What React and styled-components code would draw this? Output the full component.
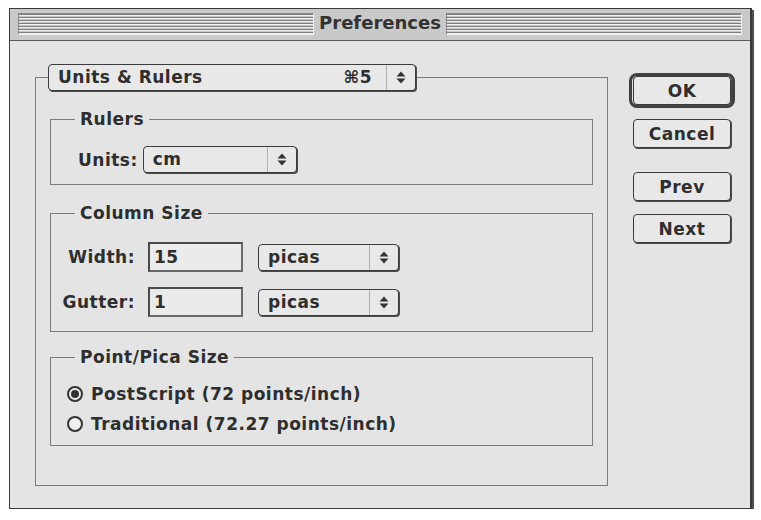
import React from 'react'
import styled, { createGlobalStyle } from 'styled-components'

const GlobalStyle = createGlobalStyle`
    html, body {
        margin: 0;
        padding: 0;
        background: #ffffff;
    }
    body {
        font-family: "DejaVu Sans", sans-serif;
        font-weight: bold;
        color: #2e2e2e;
        letter-spacing: 0.5px;
    }
`

const Window = styled.div`
    margin: 8px 0 0 9px;
    width: 743px;
    height: 501px;
    box-sizing: border-box;
    border: 1px solid #3a3a3a;
    border-right-width: 2px;
    box-shadow: 2px 2px 0 #505050;
    background: #e4e4e4;
    display: flex;
    flex-direction: column;
`

const TitleBar = styled.div`
    box-sizing: border-box;
    height: 32px;
    border-bottom: 1px solid #5a5a5a;
    background: #c9c9c9;
    display: flex;
    align-items: flex-start;
    padding: 4px 8px 0 8px;
`

const Stripes = styled.div`
    flex: 1;
    height: 20px;
    border-top: 1px solid #8a8a8a;
    border-left: 1px solid #8a8a8a;
    border-bottom: 1px solid #f2f2f2;
    border-right: 1px solid #f2f2f2;
    background: repeating-linear-gradient(
        to bottom,
        #7e7e7e 0 1px,
        #f0f0f0 1px 2px,
        #c6c6c6 2px 3px
    );
`

const Title = styled.div`
    padding: 0 5px;
    font-size: 18px;
    line-height: 20px;
    letter-spacing: 0;
    color: #333;
`

const Content = styled.div`
    flex: 1;
    display: flex;
    align-items: flex-start;
`

const MainGroup = styled.div`
    margin: 36px 0 0 25px;
    width: 573px;
    height: 409px;
    box-sizing: border-box;
    border: 1px solid #7c7c7c;
    display: flex;
    flex-direction: column;
    padding: 0 14px;
`

const Popup = styled.div`
    display: flex;
    align-items: stretch;
    width: ${(p) => p.w}px;
    height: 27px;
    box-sizing: border-box;
    border: 1px solid #3c3c3c;
    border-radius: 4px;
    box-shadow: 1px 1px 0 #4a4a4a;
    background: #e8e8e8;
    font-size: 17px;
`

const MenuPopup = styled(Popup)`
    margin: -14px 0 0 -2px;
`

const PopupText = styled.div`
    flex: 1;
    display: flex;
    align-items: center;
    justify-content: space-between;
    padding: 0 14px 0 9px;
    line-height: 25px;
`

const ArrowBox = styled.div`
    width: 28px;
    border-left: 1px solid #b0b0b0;
    display: flex;
    align-items: center;
    justify-content: center;
`

const Group = styled.div`
    margin-top: ${(p) => p.top}px;
    border: 1px solid #7c7c7c;
    display: flex;
    flex-direction: column;
    padding: 0 0 ${(p) => p.bottom}px 0;
`

const Legend = styled.div`
    align-self: flex-start;
    margin: -10px 0 0 24px;
    padding: 0 5px;
    height: 18px;
    line-height: 18px;
    font-size: 17px;
    background: #e4e4e4;
`

const Row = styled.div`
    display: flex;
    align-items: center;
    margin-top: ${(p) => p.top}px;
    padding-left: ${(p) => p.left || 0}px;
`

const Label = styled.div`
    font-size: 17px;
    width: ${(p) => (p.w ? p.w + 'px' : 'auto')};
    text-align: right;
    margin-right: ${(p) => p.gap}px;
`

const TextField = styled.div`
    width: 95px;
    height: 30px;
    box-sizing: border-box;
    border: 2px solid #4a4a4a;
    border-right-color: #6a6a6a;
    border-bottom-color: #6a6a6a;
    background: #ebebeb;
    font-size: 17px;
    line-height: 26px;
    padding-left: 4px;
    margin-right: 15px;
`

const RadioRow = styled.div`
    display: flex;
    align-items: center;
    height: 24px;
    margin-top: ${(p) => p.top}px;
    padding-left: 16px;
    font-size: 17px;
`

const Radio = styled.span`
    width: 16px;
    height: 16px;
    box-sizing: border-box;
    border: 2px solid #333;
    border-radius: 50%;
    background: #f0f0f0;
    margin-right: 8px;
    display: flex;
    align-items: center;
    justify-content: center;

    &::after {
        content: '';
        width: 8px;
        height: 8px;
        border-radius: 50%;
        background: ${(p) => (p.on ? '#333' : 'transparent')};
    }
`

const Buttons = styled.div`
    margin: 32px 0 0 21px;
    width: 106px;
    display: flex;
    flex-direction: column;
    align-items: center;
`

const DefaultRing = styled.div`
    width: 106px;
    height: 35px;
    box-sizing: border-box;
    border: 3px solid #404040;
    border-radius: 8px;
    display: flex;
    align-items: center;
    justify-content: center;
`

const Button = styled.div`
    width: 98px;
    height: 29px;
    box-sizing: border-box;
    margin-top: ${(p) => p.top || 0}px;
    border: 1px solid #3a3a3a;
    border-radius: 4px;
    box-shadow: 1px 1px 0 #4a4a4a;
    background: #e8e8e8;
    font-size: 17px;
    display: flex;
    align-items: center;
    justify-content: center;
`

const Arrows = () => (
    <svg width="10" height="13" viewBox="0 0 10 13">
        <path d="M5 0.5 L9.5 5.5 L0.5 5.5 Z" fill="#333" />
        <path d="M5 12.5 L9.5 7.5 L0.5 7.5 Z" fill="#333" />
    </svg>
)

function PopupMenu({ w, text, shortcut, as: Comp = Popup }) {
    return (
        <Comp w={w}>
            <PopupText>
                <span>{text}</span>
                {shortcut && <span>{shortcut}</span>}
            </PopupText>
            <ArrowBox>
                <Arrows />
            </ArrowBox>
        </Comp>
    )
}

export default function App() {
    return (
        <>
            <GlobalStyle />
            <Window>
                <TitleBar>
                    <Stripes />
                    <Title>Preferences</Title>
                    <Stripes />
                </TitleBar>
                <Content>
                    <MainGroup>
                        <PopupMenu as={MenuPopup} w={368} text="Units & Rulers" shortcut="⌘5" />

                        <Group top={28} bottom={11}>
                            <Legend>Rulers</Legend>
                            <Row top={18} left={27}>
                                <Label gap={5}>Units:</Label>
                                <PopupMenu w={154} text="cm" />
                            </Row>
                        </Group>

                        <Group top={28} bottom={14}>
                            <Legend>Column Size</Legend>
                            <Row top={20}>
                                <Label w={84} gap={13}>Width:</Label>
                                <TextField>15</TextField>
                                <PopupMenu w={141} text="picas" />
                            </Row>
                            <Row top={15}>
                                <Label w={84} gap={13}>Gutter:</Label>
                                <TextField>1</TextField>
                                <PopupMenu w={141} text="picas" />
                            </Row>
                        </Group>

                        <Group top={25} bottom={9}>
                            <Legend>Point/Pica Size</Legend>
                            <RadioRow top={16}>
                                <Radio on />
                                PostScript (72 points/inch)
                            </RadioRow>
                            <RadioRow top={6}>
                                <Radio />
                                Traditional (72.27 points/inch)
                            </RadioRow>
                        </Group>
                    </MainGroup>

                    <Buttons>
                        <DefaultRing>
                            <Button>OK</Button>
                        </DefaultRing>
                        <Button top={11}>Cancel</Button>
                        <Button top={24}>Prev</Button>
                        <Button top={13}>Next</Button>
                    </Buttons>
                </Content>
            </Window>
        </>
    )
}
